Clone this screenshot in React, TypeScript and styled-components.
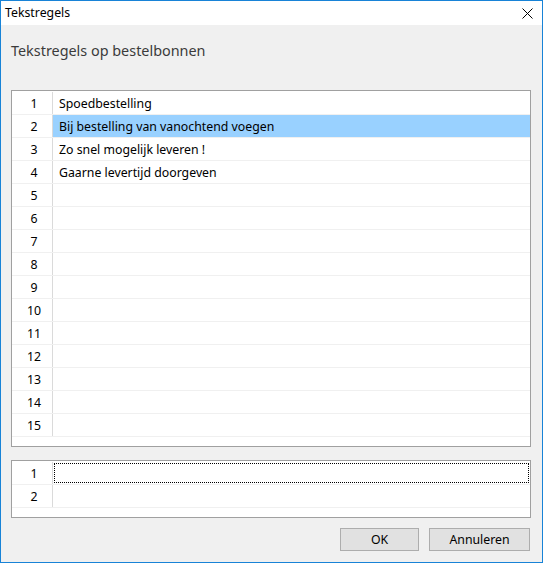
import React from "react";
import styled, { createGlobalStyle } from "styled-components";

const GlobalStyle = createGlobalStyle`
     html, body {
          margin: 0;
          padding: 0;
          background: #ffffff;
     }
     * {
          box-sizing: border-box;
     }
`;

const mainLines = [
     "Spoedbestelling",
     "Bij bestelling van vanochtend voegen",
     "Zo snel mogelijk leveren !",
     "Gaarne levertijd doorgeven",
     "",
     "",
     "",
     "",
     "",
     "",
     "",
     "",
     "",
     "",
     "",
];

const extraLines = ["", ""];

type GridProps = {
     lines: string[];
     selected?: number;
     focused?: number;
     last?: boolean;
};

const LineGrid: React.FC<GridProps> = (props) => {
     return (
          <S.Grid $last={props.last}>
               {props.lines.map((text, i) => (
                    <S.Row key={i}>
                         <S.Num>{i + 1}</S.Num>
                         <S.Cell $selected={props.selected === i} $focused={props.focused === i}>
                              {text}
                         </S.Cell>
                    </S.Row>
               ))}
          </S.Grid>
     );
};

export default function App() {
     return (
          <>
               <GlobalStyle />
               <S.Window>
                    <S.TitleBar>
                         <S.Title>Tekstregels</S.Title>
                         <S.Close>
                              <svg width="11" height="11" viewBox="0 0 11 11">
                                   <path d="M0.5 0.5 L10.5 10.5 M10.5 0.5 L0.5 10.5" stroke="#000" strokeWidth="1" />
                              </svg>
                         </S.Close>
                    </S.TitleBar>
                    <S.Body>
                         <S.Heading>Tekstregels op bestelbonnen</S.Heading>
                         <LineGrid lines={mainLines} selected={1} />
                         <LineGrid lines={extraLines} focused={0} last />
                         <S.Buttons>
                              <S.Button $w={79}>OK</S.Button>
                              <S.Button $w={101}>Annuleren</S.Button>
                         </S.Buttons>
                    </S.Body>
               </S.Window>
          </>
     );
}

const font = `"Segoe UI", "Noto Sans", "Open Sans", sans-serif`;

const S = {
     Window: styled.div`
          width: 543px;
          height: 563px;
          border: 1px solid #1883d7;
          display: flex;
          flex-direction: column;
          font-family: ${font};
          font-size: 12.3px;
          color: #000;
          background: #f0f0f0;
     `,
     TitleBar: styled.div`
          height: 24px;
          background: #ffffff;
          display: flex;
          align-items: center;
          justify-content: space-between;
          padding: 0 9px 1px 4px;
     `,
     Title: styled.div`
          font-size: 12.3px;
          color: #000;
     `,
     Close: styled.div`
          display: flex;
          align-items: center;
          margin-top: 1px;
     `,
     Body: styled.div`
          flex: 1;
          padding: 16px 11px 0 10px;
          display: flex;
          flex-direction: column;
     `,
     Heading: styled.div`
          font-size: 14.4px;
          line-height: 20px;
          color: #3b3b3b;
          margin-bottom: 29px;
     `,
     Grid: styled.div<{ $last?: boolean }>`
          border: 1px solid #a0a0a0;
          background: #ffffff;
          padding: 1px 0 9px 0;
          margin-bottom: ${(p) => (p.$last ? "11px" : "13px")};
     `,
     Row: styled.div`
          display: grid;
          grid-template-columns: 41px 1fr;
          height: 23px;
          border-bottom: 1px solid #f0f0f0;
     `,
     Num: styled.div`
          border-right: 1px solid #dadada;
          display: flex;
          align-items: center;
          justify-content: center;
          padding-left: 4px;
     `,
     Cell: styled.div<{ $selected?: boolean; $focused?: boolean }>`
          position: relative;
          display: flex;
          align-items: center;
          padding-left: 6px;
          background: ${(p) => (p.$selected ? "#99d1ff" : "#ffffff")};
          ${(p) =>
               p.$focused &&
               `&::after {
                    content: "";
                    position: absolute;
                    inset: 1px;
                    border: 1px dotted #000;
               }`}
     `,
     Buttons: styled.div`
          display: flex;
          justify-content: flex-end;
          gap: 10px;
          margin-right: 1px;
          margin-top: -1px;
     `,
     Button: styled.div<{ $w: number }>`
          width: ${(p) => p.$w}px;
          height: 23px;
          border: 1px solid #adadad;
          background: #e1e1e1;
          display: flex;
          align-items: center;
          justify-content: center;
          font-size: 12.3px;
     `,
};
